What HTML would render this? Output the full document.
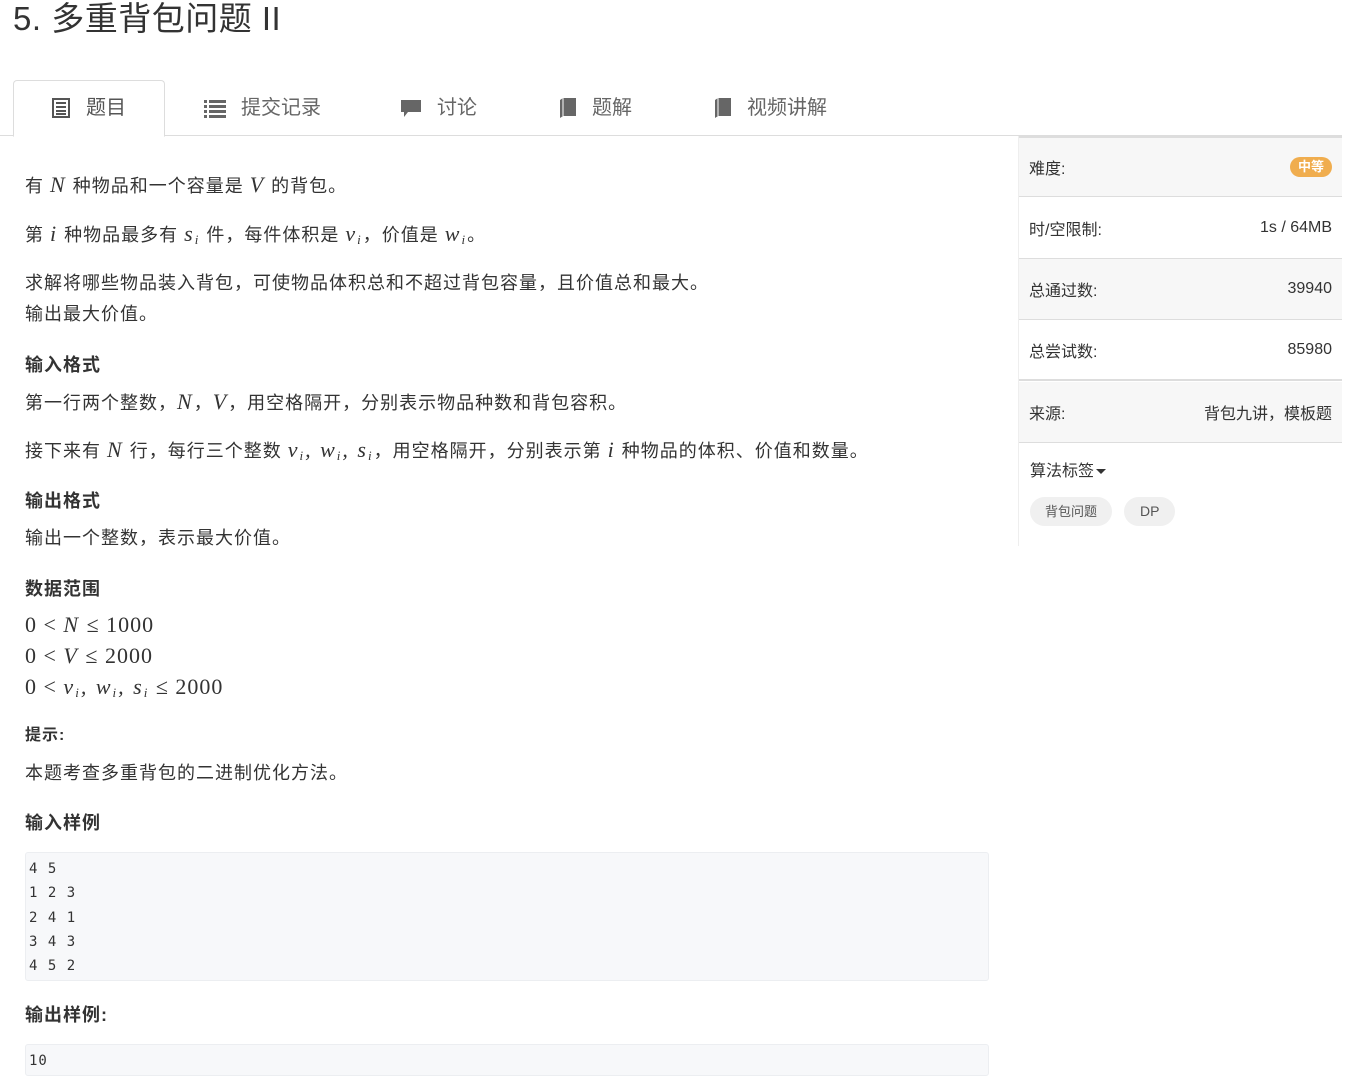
<!DOCTYPE html>
<html><head><meta charset="utf-8"><style>
*{margin:0;padding:0;box-sizing:border-box}
body{width:1351px;height:1082px;overflow:hidden;background:#fff;color:#333;font-family:"Liberation Sans","Noto Sans CJK SC",sans-serif;position:relative}
.a{position:absolute;white-space:nowrap;line-height:24px}
.t{font-size:18px;left:25px;letter-spacing:1px}
.b{font-weight:bold}
.m{font-family:"Liberation Serif","DejaVu Serif",serif;font-style:italic;font-size:22px;letter-spacing:2px}
.r{font-family:"Liberation Serif","DejaVu Serif",serif;font-size:22px;font-style:normal;letter-spacing:1px}
sub{font-size:13px;vertical-align:-3px}
.tab{position:absolute;top:80px;height:56px;font-size:20px;color:#666;line-height:56px;display:flex;align-items:center;gap:15px}
.pre{position:absolute;left:25px;width:964px;background:#f7f8fa;border:1px solid #eceef1;border-radius:3px;font-family:"DejaVu Sans Mono","Liberation Mono",monospace;font-size:14px;letter-spacing:1px;color:#333;padding:4px 3px;line-height:24.3px}
.row{position:absolute;left:1019px;width:323px;height:61px;border-bottom:1px solid #ddd;font-size:16px;color:#333;display:flex;justify-content:space-between;align-items:center;padding:0 10px}
.g{background:#f7f7f7}
</style></head><body>
<div class="a" style="left:13px;top:0;font-size:33px;line-height:38px;color:#333;letter-spacing:0.5px">5. 多重背包问题 II</div>

<div style="position:absolute;left:0;top:135px;width:1342px;border-top:1px solid #ddd"></div>
<div style="position:absolute;left:13px;top:80px;width:152px;height:57px;border:1px solid #ddd;border-bottom:1px solid #fff;border-radius:4px 4px 0 0;background:#fff"></div>
<div class="tab" style="left:51px;color:#555"><svg width="20" height="20" viewBox="0 0 20 20"><rect x="2" y="1" width="16" height="18" fill="none" stroke="#555" stroke-width="2"/><rect x="5" y="4" width="10" height="2" fill="#555"/><rect x="5" y="8" width="10" height="2" fill="#555"/><rect x="5" y="12" width="10" height="2" fill="#555"/><rect x="5" y="15" width="10" height="2" fill="#555"/></svg>题目</div>
<div class="tab" style="left:204px"><svg width="22" height="20" viewBox="0 0 22 20"><g fill="#666"><rect x="0" y="2" width="3" height="3"/><rect x="5" y="2" width="17" height="3"/><rect x="0" y="7" width="3" height="3"/><rect x="5" y="7" width="17" height="3"/><rect x="0" y="12" width="3" height="3"/><rect x="5" y="12" width="17" height="3"/><rect x="0" y="17" width="3" height="3"/><rect x="5" y="17" width="17" height="3"/></g></svg>提交记录</div>
<div class="tab" style="left:400px"><svg width="22" height="20" viewBox="0 0 22 20"><path d="M1 2h20v12H8l-4 5v-5H1z" fill="#666"/></svg>讨论</div>
<div class="tab" style="left:557px"><svg width="20" height="22" viewBox="0 0 20 22"><path d="M3 3l3-2h13v18H6l-3 2z" fill="#666"/><path d="M6 1v18" stroke="#fff" stroke-width="1"/></svg>题解</div>
<div class="tab" style="left:712px"><svg width="20" height="22" viewBox="0 0 20 22"><path d="M3 3l3-2h13v18H6l-3 2z" fill="#666"/><path d="M6 1v18" stroke="#fff" stroke-width="1"/></svg>视频讲解</div>

<div class="a t" style="top:173px">有 <span class="m">N</span> 种物品和一个容量是 <span class="m">V</span> 的背包。</div>
<div class="a t" style="top:222px">第 <span class="m">i</span> 种物品最多有 <span class="m">s<sub>i</sub></span> 件，每件体积是 <span class="m">v<sub>i</sub></span>，价值是 <span class="m">w<sub>i</sub></span>。</div>
<div class="a t" style="top:271px">求解将哪些物品装入背包，可使物品体积总和不超过背包容量，且价值总和最大。</div>
<div class="a t" style="top:302px">输出最大价值。</div>
<div class="a t b" style="top:353px">输入格式</div>
<div class="a t" style="top:390px">第一行两个整数，<span class="m">N</span>，<span class="m">V</span>，用空格隔开，分别表示物品种数和背包容积。</div>
<div class="a t" style="top:438px">接下来有 <span class="m">N</span> 行，每行三个整数 <span class="m">v<sub>i</sub>, w<sub>i</sub>, s<sub>i</sub></span>，用空格隔开，分别表示第 <span class="m">i</span> 种物品的体积、价值和数量。</div>
<div class="a t b" style="top:489px">输出格式</div>
<div class="a t" style="top:526px">输出一个整数，表示最大价值。</div>
<div class="a t b" style="top:577px">数据范围</div>
<div class="a t" style="top:613px"><span class="r">0 &lt; </span><span class="m">N</span><span class="r"> ≤ 1000</span></div>
<div class="a t" style="top:644px"><span class="r">0 &lt; </span><span class="m">V</span><span class="r"> ≤ 2000</span></div>
<div class="a t" style="top:675px"><span class="r">0 &lt; </span><span class="m">v<sub>i</sub>, w<sub>i</sub>, s<sub>i</sub></span><span class="r"> ≤ 2000</span></div>
<div class="a t b" style="top:724px;font-size:16px">提示:</div>
<div class="a t" style="top:761px">本题考查多重背包的二进制优化方法。</div>
<div class="a t b" style="top:811px">输入样例</div>
<div class="pre" style="top:852px;height:129px">4 5<br>1 2 3<br>2 4 1<br>3 4 3<br>4 5 2</div>
<div class="a t b" style="top:1003px">输出样例:</div>
<div class="pre" style="top:1044px;height:32px">10</div>

<div style="position:absolute;left:1018px;top:136px;height:410px;border-left:1px solid #eee"></div>
<div class="row g" style="top:136px;border-top:2px solid #ddd"><span>难度:</span><span style="background:#f0ad4e;color:#fff;font-weight:bold;font-size:13px;border-radius:10px;padding:1px 8px;line-height:18px">中等</span></div>
<div class="row" style="top:198px"><span>时/空限制:</span><span>1s / 64MB</span></div>
<div class="row g" style="top:259px"><span>总通过数:</span><span>39940</span></div>
<div class="row" style="top:320px;border-bottom:2px solid #ddd"><span>总尝试数:</span><span>85980</span></div>
<div class="row g" style="top:382px"><span>来源:</span><span>背包九讲，模板题</span></div>
<div class="a" style="left:1030px;top:460px;font-size:16px">算法标签<span style="display:inline-block;border-left:5px solid transparent;border-right:5px solid transparent;border-top:5px solid #333;vertical-align:middle;margin-left:2px"></span></div>
<div class="a" style="left:1030px;top:497px;height:29px;line-height:29px;font-size:13px;color:#555;background:#f0f0f0;border-radius:15px;padding:0 15px">背包问题</div>
<div class="a" style="left:1124px;top:497px;height:29px;line-height:29px;font-size:14px;color:#555;background:#f0f0f0;border-radius:15px;padding:0 16px">DP</div>
</body></html>
